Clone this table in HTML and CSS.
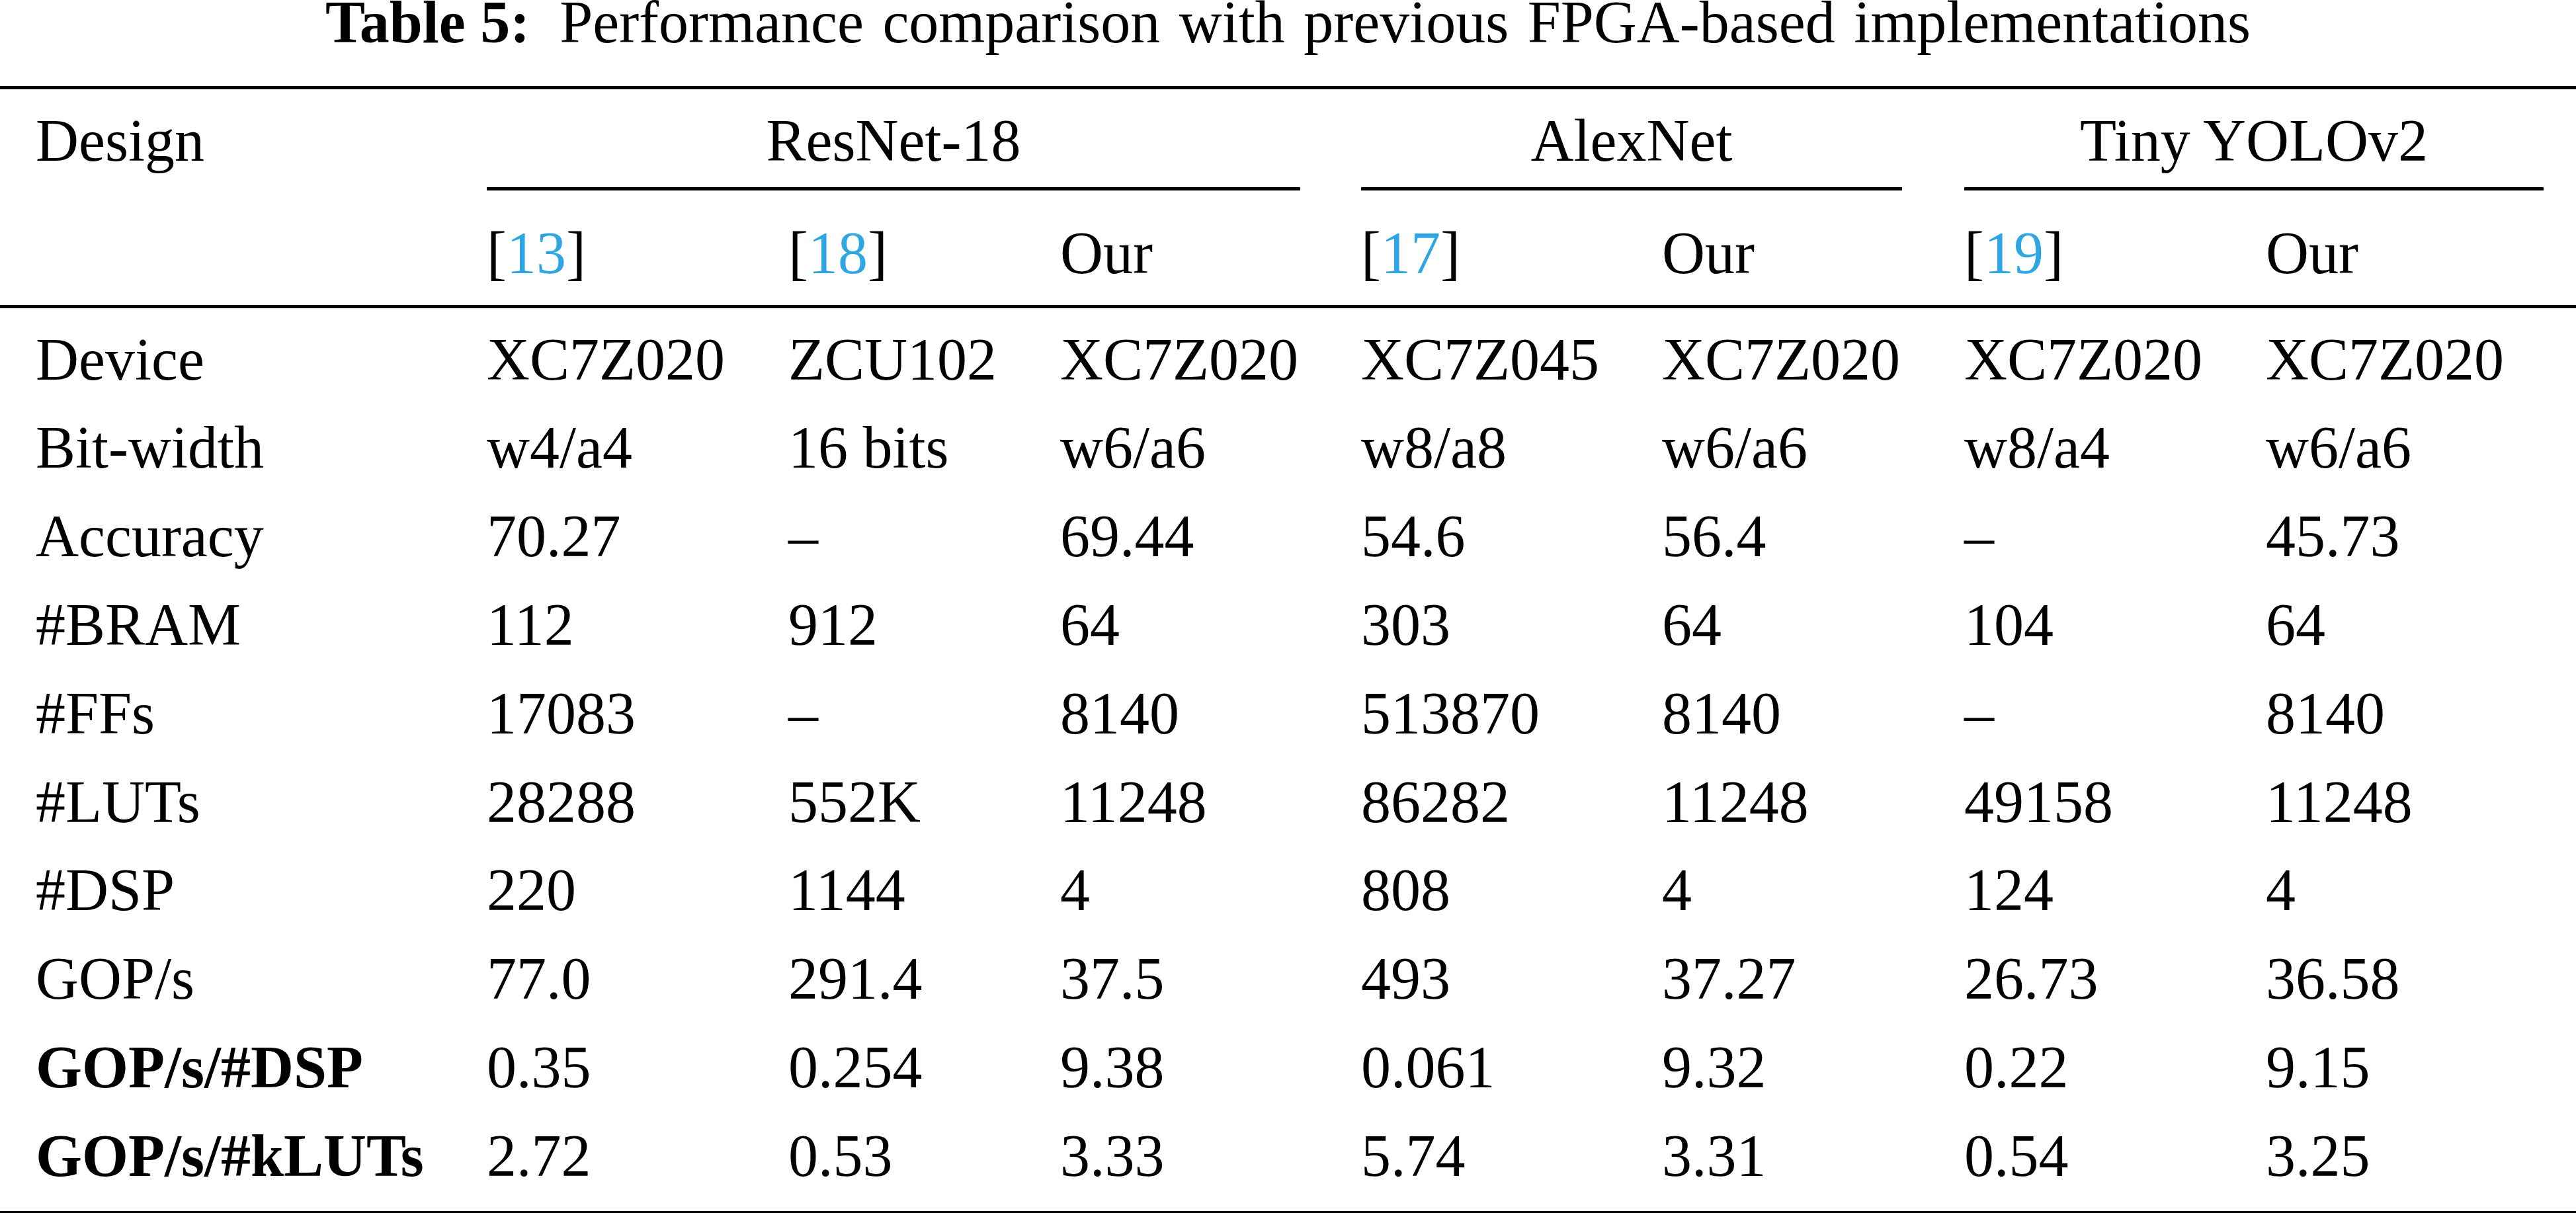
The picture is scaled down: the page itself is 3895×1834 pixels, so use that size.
FILE: index.html
```html
<!DOCTYPE html>
<html lang="en">
<head>
<meta charset="utf-8">
<title>Table 5</title>
<link rel="stylesheet" href="styles.css">
</head>
<body>
<div class="caption"><b>Table 5:</b><span class="caption-text">Performance comparison with previous FPGA-based implementations</span></div>
<div class="rule"></div>
<div class="grid thead">
  <div class="cell">Design</div>
  <div class="cell group span3">ResNet-18</div>
  <div class="cell group span2">AlexNet</div>
  <div class="cell group span2 last">Tiny YOLOv2</div>

  <div class="blank"></div>
  <div class="cmid span3"></div>
  <div class="cmid span2"></div>
  <div class="cmid span2 last"></div>

  <div class="cell"></div>
  <div class="cell">[<span class="cite">13</span>]</div>
  <div class="cell">[<span class="cite">18</span>]</div>
  <div class="cell">Our</div>
  <div class="cell">[<span class="cite">17</span>]</div>
  <div class="cell">Our</div>
  <div class="cell">[<span class="cite">19</span>]</div>
  <div class="cell">Our</div>
</div>
<div class="rule"></div>
<div class="grid tbody">
  <div class="cell">Device</div><div class="cell">XC7Z020</div><div class="cell">ZCU102</div><div class="cell">XC7Z020</div><div class="cell">XC7Z045</div><div class="cell">XC7Z020</div><div class="cell">XC7Z020</div><div class="cell">XC7Z020</div>
  <div class="cell">Bit-width</div><div class="cell">w4/a4</div><div class="cell">16 bits</div><div class="cell">w6/a6</div><div class="cell">w8/a8</div><div class="cell">w6/a6</div><div class="cell">w8/a4</div><div class="cell">w6/a6</div>
  <div class="cell">Accuracy</div><div class="cell">70.27</div><div class="cell">–</div><div class="cell">69.44</div><div class="cell">54.6</div><div class="cell">56.4</div><div class="cell">–</div><div class="cell">45.73</div>
  <div class="cell">#BRAM</div><div class="cell">112</div><div class="cell">912</div><div class="cell">64</div><div class="cell">303</div><div class="cell">64</div><div class="cell">104</div><div class="cell">64</div>
  <div class="cell">#FFs</div><div class="cell">17083</div><div class="cell">–</div><div class="cell">8140</div><div class="cell">513870</div><div class="cell">8140</div><div class="cell">–</div><div class="cell">8140</div>
  <div class="cell">#LUTs</div><div class="cell">28288</div><div class="cell">552K</div><div class="cell">11248</div><div class="cell">86282</div><div class="cell">11248</div><div class="cell">49158</div><div class="cell">11248</div>
  <div class="cell">#DSP</div><div class="cell">220</div><div class="cell">1144</div><div class="cell">4</div><div class="cell">808</div><div class="cell">4</div><div class="cell">124</div><div class="cell">4</div>
  <div class="cell">GOP/s</div><div class="cell">77.0</div><div class="cell">291.4</div><div class="cell">37.5</div><div class="cell">493</div><div class="cell">37.27</div><div class="cell">26.73</div><div class="cell">36.58</div>
  <div class="cell bold">GOP/s/#DSP</div><div class="cell">0.35</div><div class="cell">0.254</div><div class="cell">9.38</div><div class="cell">0.061</div><div class="cell">9.32</div><div class="cell">0.22</div><div class="cell">9.15</div>
  <div class="cell bold">GOP/s/#kLUTs</div><div class="cell">2.72</div><div class="cell">0.53</div><div class="cell">3.33</div><div class="cell">5.74</div><div class="cell">3.31</div><div class="cell">0.54</div><div class="cell">3.25</div>
</div>
<div class="rule"></div>
</body>
</html>
```
FILE: styles.css
```css
html, body {
  margin: 0;
  padding: 0;
  background: #ffffff;
}

body {
  font-family: "Liberation Serif", "Times New Roman", serif;
  font-size: 90px;
  color: #000000;
  width: 3895px;
  overflow: hidden;
}

.caption {
  height: 67px;
  line-height: 67px;
  text-align: center;
  white-space: nowrap;
  margin-bottom: 63px;
}

.caption b {
  font-weight: bold;
}

.caption-text {
  margin-left: 45px;
  word-spacing: 6px;
}

.rule {
  height: 5px;
  background: #000000;
}

.grid {
  display: grid;
  grid-template-columns: 682px 456px 411px 455px 455px 457px 456px 420px;
  padding-left: 54px;
}

.thead {
  padding-top: 32.6px;
  padding-bottom: 33.4px;
}

.tbody {
  padding-top: 10.7px;
  padding-bottom: 16.3px;
  grid-auto-rows: 133.8px;
}

.cell {
  white-space: nowrap;
  line-height: 90px;
  height: 90px;
}

.blank {
  height: 0;
}

.tbody .cell {
  line-height: 133.8px;
  height: 133.8px;
}

.bold {
  font-weight: bold;
}

.span3 {
  grid-column: span 3;
  margin-right: 92px;
}

.span2 {
  grid-column: span 2;
  margin-right: 94px;
}

.span2.last {
  margin-right: 0;
}

.group {
  text-align: center;
}

.cmid {
  height: 4.6px;
  background: #000000;
  margin-top: 25.4px;
  margin-bottom: 50px;
}

.cite {
  color: #2ea6e3;
}
```
